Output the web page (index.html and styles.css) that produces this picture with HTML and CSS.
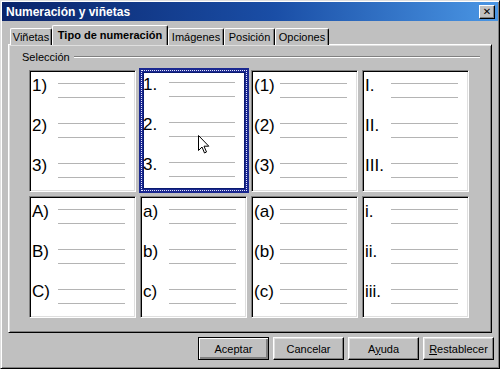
FILE: index.html
```html
<!DOCTYPE html>
<html lang="es">
<head>
    <meta charset="UTF-8">
    <title>Numeración y viñetas</title>
    <link rel="stylesheet" href="styles.css">
</head>
<body>
<div class="window">

    <div class="titlebar">
        <span class="title">Numeración y viñetas</span>
        <button class="close">&#x2715;</button>
    </div>

    <div class="tabs">
        <div class="tab t1">Viñetas</div>
        <div class="tab t2 active">Tipo de numeración</div>
        <div class="tab t3">Imágenes</div>
        <div class="tab t4">Posición</div>
        <div class="tab t5">Opciones</div>
    </div>

    <div class="panel">
        <div class="group-head">
            <span>Selección</span>
            <div class="etch"></div>
        </div>

        <div class="grid">
            <div class="cell">
                <div class="item"><span class="num">1)</span><div class="rules"><i></i><i></i></div></div>
                <div class="item"><span class="num">2)</span><div class="rules"><i></i><i></i></div></div>
                <div class="item"><span class="num">3)</span><div class="rules"><i></i><i></i></div></div>
            </div>
            <div class="cell selected">
                <div class="item"><span class="num">1.</span><div class="rules"><i></i><i></i></div></div>
                <div class="item"><span class="num">2.</span><div class="rules"><i></i><i></i></div></div>
                <div class="item"><span class="num">3.</span><div class="rules"><i></i><i></i></div></div>
                <!-- puntero del ratón -->
                <svg class="pointer" width="12" height="19" viewBox="0 0 12 19">
                    <path d="M0.5 0.5 L0.5 15.5 L4 12 L6.5 18 L8.5 17 L6 11.2 L10.8 11.2 Z" fill="#fff" stroke="#000" stroke-width="1"/>
                </svg>
            </div>
            <div class="cell">
                <div class="item"><span class="num">(1)</span><div class="rules"><i></i><i></i></div></div>
                <div class="item"><span class="num">(2)</span><div class="rules"><i></i><i></i></div></div>
                <div class="item"><span class="num">(3)</span><div class="rules"><i></i><i></i></div></div>
            </div>
            <div class="cell">
                <div class="item"><span class="num">I.</span><div class="rules"><i></i><i></i></div></div>
                <div class="item"><span class="num">II.</span><div class="rules"><i></i><i></i></div></div>
                <div class="item"><span class="num">III.</span><div class="rules"><i></i><i></i></div></div>
            </div>

            <div class="cell">
                <div class="item"><span class="num">A)</span><div class="rules"><i></i><i></i></div></div>
                <div class="item"><span class="num">B)</span><div class="rules"><i></i><i></i></div></div>
                <div class="item"><span class="num">C)</span><div class="rules"><i></i><i></i></div></div>
            </div>
            <div class="cell">
                <div class="item"><span class="num">a)</span><div class="rules"><i></i><i></i></div></div>
                <div class="item"><span class="num">b)</span><div class="rules"><i></i><i></i></div></div>
                <div class="item"><span class="num">c)</span><div class="rules"><i></i><i></i></div></div>
            </div>
            <div class="cell">
                <div class="item"><span class="num">(a)</span><div class="rules"><i></i><i></i></div></div>
                <div class="item"><span class="num">(b)</span><div class="rules"><i></i><i></i></div></div>
                <div class="item"><span class="num">(c)</span><div class="rules"><i></i><i></i></div></div>
            </div>
            <div class="cell">
                <div class="item"><span class="num">i.</span><div class="rules"><i></i><i></i></div></div>
                <div class="item"><span class="num">ii.</span><div class="rules"><i></i><i></i></div></div>
                <div class="item"><span class="num">iii.</span><div class="rules"><i></i><i></i></div></div>
            </div>
        </div>
    </div>

    <div class="buttons">
        <button class="btn default">Aceptar</button>
        <button class="btn">Cancelar</button>
        <button class="btn">A<u>y</u>uda</button>
        <button class="btn"><u>R</u>establecer</button>
    </div>

</div>
</body>
</html>
```

FILE: styles.css
```css
/* Base */
* {
    margin: 0;
    padding: 0;
    box-sizing: border-box;
}

body {
    background: #c0c0c0;
    font-family: "Liberation Sans", Arial, sans-serif;
    font-size: 11px;
    color: #000;
}

/* Ventana */
.window {
    width: 500px;
    height: 369px;
    background: #c0c0c0;
    border: 1px solid;
    border-color: #dfdfdf #000 #000 #dfdfdf;
    box-shadow: inset 1px 1px #fff, inset -1px -1px #808080;
    padding: 1px;
}

.titlebar {
    height: 19px;
    display: flex;
    align-items: center;
    justify-content: space-between;
    padding: 0 3px 0 4px;
    background: linear-gradient(90deg, #0a246a 0%, #1a4ea6 55%, #4a96e4 100%);
}

.title {
    color: #fff;
    font-weight: bold;
    font-size: 12px;
}

.close {
    width: 16px;
    height: 14px;
    background: #c0c0c0;
    border: 1px solid;
    border-color: #fff #000 #000 #fff;
    box-shadow: inset -1px -1px #808080;
    font-family: "DejaVu Sans", sans-serif;
    font-size: 10px;
    font-weight: bold;
    line-height: 11px;
    color: #000;
}

/* Pestañas */
.tabs {
    display: flex;
    align-items: flex-end;
    height: 20px;
    margin: 4px 0 -1px 8px;
    position: relative;
    z-index: 2;
}

.tab {
    height: 17px;
    display: flex;
    align-items: center;
    justify-content: center;
    background: #c0c0c0;
    border-top: 1px solid #fff;
    border-left: 1px solid #fff;
    border-right: 1px solid #000;
    box-shadow: inset -1px 0 #808080;
    border-radius: 2px 2px 0 0;
    padding-bottom: 1px;
}

.t1 { width: 42px; }
.t2 { width: 116px; }
.t3 { width: 56px; }
.t4 { width: 51px; }
.t5 { width: 54px; }

.tab.active {
    height: 20px;
    font-weight: bold;
    padding-bottom: 2px;
}

/* Panel */
.panel {
    height: 289px;
    margin: 0 6px;
    border: 1px solid;
    border-color: #fff #000 #000 #fff;
    box-shadow: inset 1px 1px #dfdfdf, inset -1px -1px #808080;
    padding: 5px 11px 0 12px;
}

.group-head {
    display: flex;
    align-items: center;
    height: 13px;
    gap: 4px;
}

.group-head span {
    padding-left: 1px;
}

.etch {
    flex: 1;
    height: 2px;
    border-top: 1px solid #808080;
    border-bottom: 1px solid #fff;
}

.grid {
    display: grid;
    grid-template-columns: repeat(4, 107px);
    grid-template-rows: repeat(2, 122px);
    gap: 4px;
    margin: 7px 0 0 8px;
}

.cell {
    background: #fff;
    border: 1px solid;
    border-color: #808080 #fff #fff #808080;
    box-shadow: inset 1px 1px #000, inset -1px -1px #dfdfdf;
    padding: 5px 0 0 2px;
    position: relative;
}

.cell.selected {
    margin: -2px -2px -1px -1px;
    border: 4px solid #1a2890;
    box-shadow: inset 0 0 0 1px #0a1a70;
    outline: 1px dotted #e8e8ff;
    outline-offset: -3px;
    padding: 3px 0 0 0;
}

.item {
    display: flex;
    height: 40px;
}

.num {
    width: 26px;
    font-family: "Liberation Sans", Arial, sans-serif;
    font-size: 17px;
    line-height: 20px;
    white-space: nowrap;
}

.rules {
    flex: 1;
    margin-right: 10px;
    padding-top: 7px;
}

.rules i {
    display: block;
    height: 1px;
    background: #b4b4b4;
    margin-bottom: 13px;
}

.pointer {
    position: absolute;
    left: 55px;
    top: 63px;
}

/* Botones */
.buttons {
    display: flex;
    justify-content: flex-end;
    gap: 4px;
    margin-top: 4px;
    padding-right: 4px;
}

.btn {
    width: 71px;
    height: 23px;
    background: #c0c0c0;
    border: 1px solid;
    border-color: #fff #000 #000 #fff;
    box-shadow: inset -1px -1px #808080, inset 1px 1px #dfdfdf;
    font-family: "Liberation Sans", Arial, sans-serif;
    font-size: 11px;
    color: #000;
}

.btn.default {
    border: 1px solid #000;
    box-shadow: inset 1px 1px #fff, inset -2px -2px #808080;
}
```
